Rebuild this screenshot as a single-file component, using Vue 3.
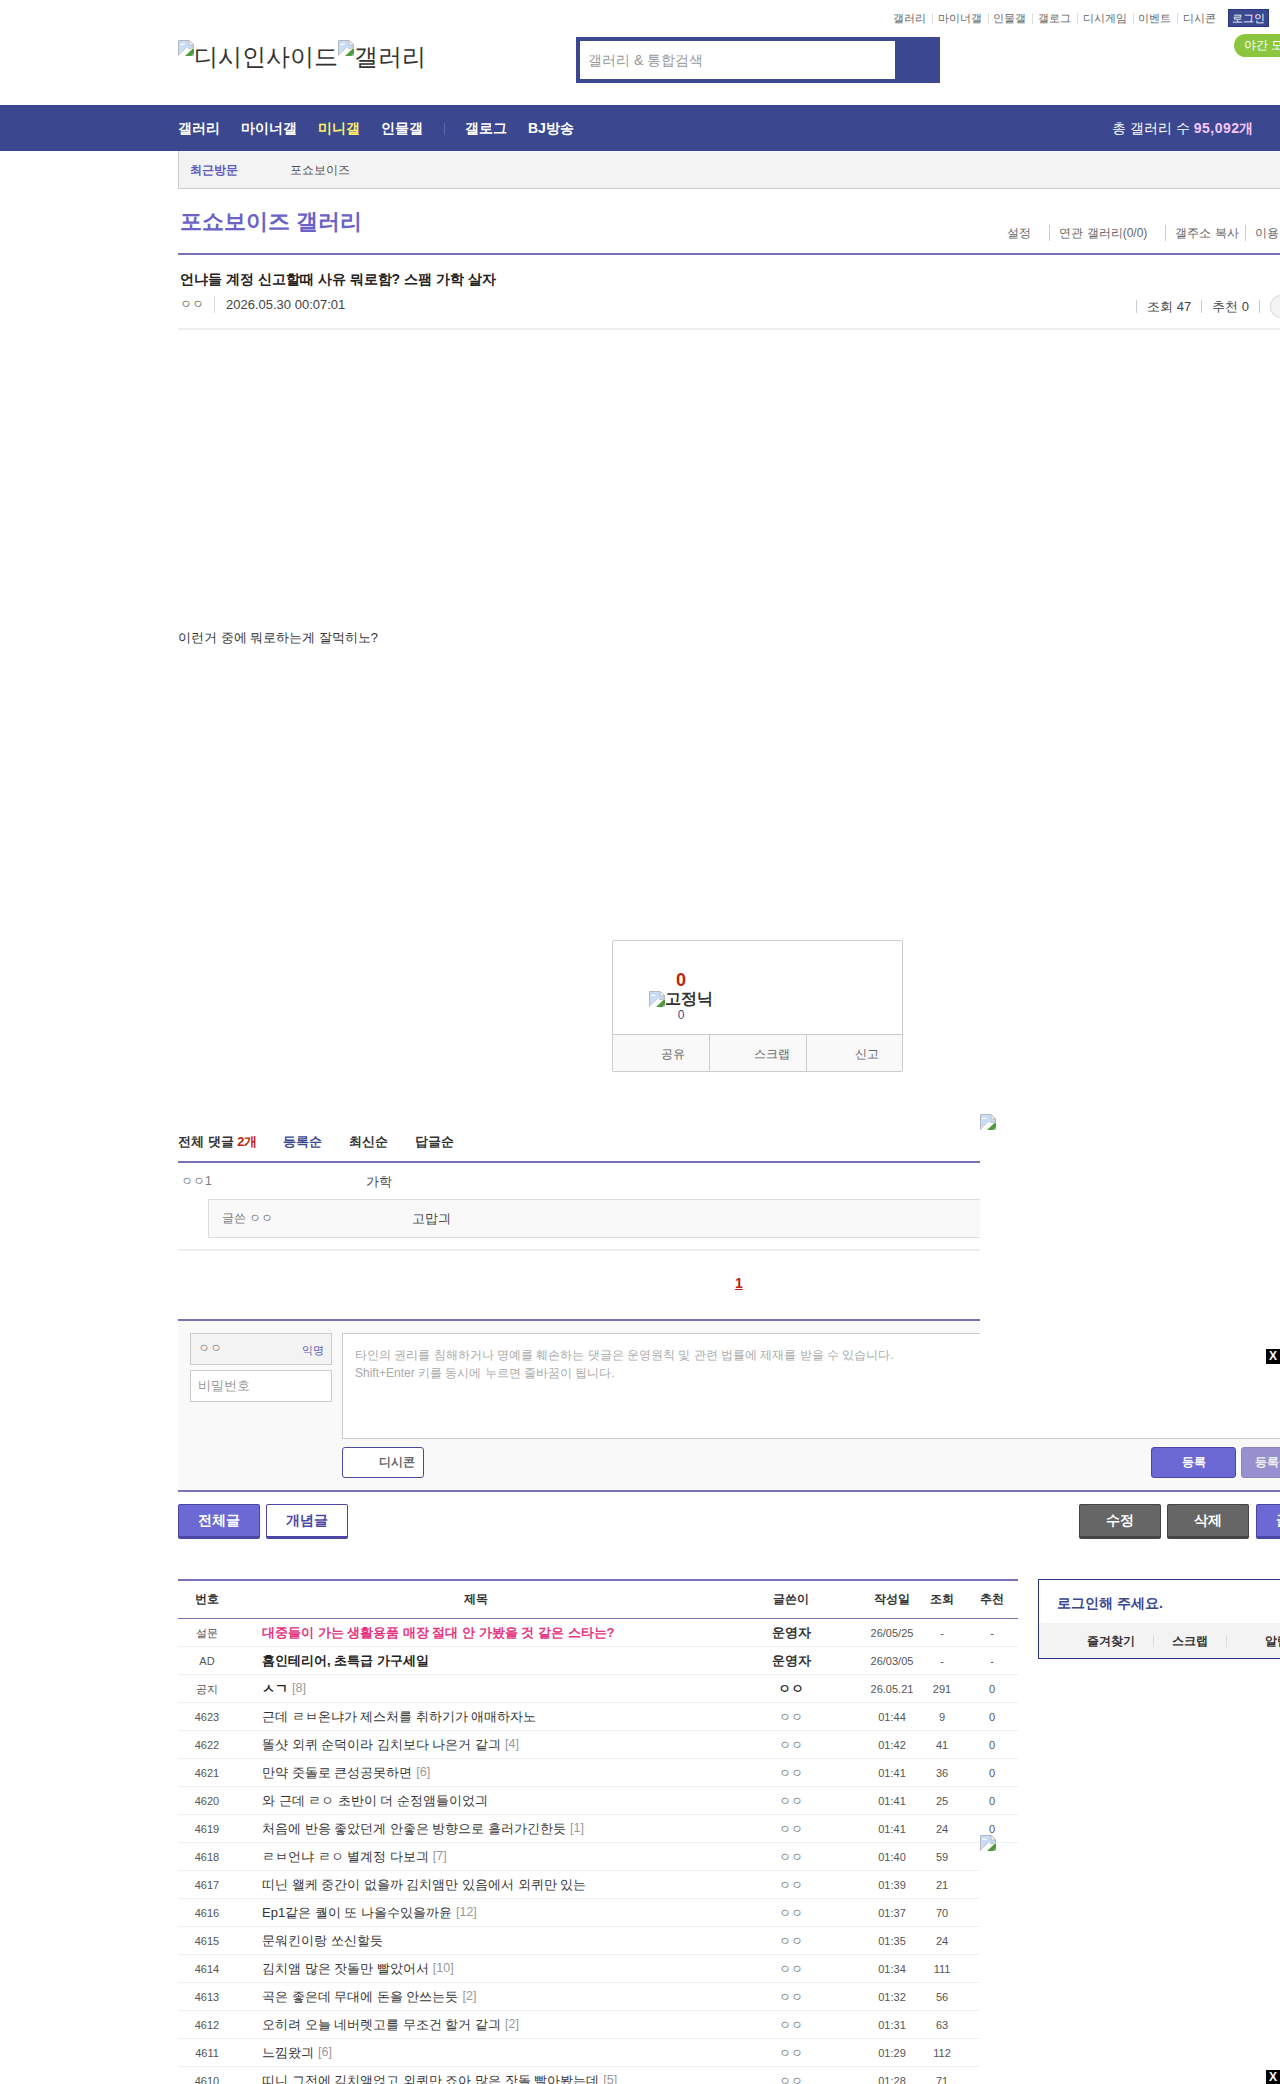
<script setup>
const topLinks = ["갤러리", "마이너갤", "인물갤", "갤로그", "디시게임", "이벤트", "디시콘"];
const mainNav = ["갤러리", "마이너갤", "미니갤", "인물갤"];

const notices = [
  { no: "설문", title: "대중들이 가는 생활용품 매장 절대 안 가봤을 것 같은 스타는?", cls: "pink", writer: "운영자", date: "26/05/25", hit: "-", rec: "-", small: true },
  { no: "AD", title: "홈인테리어, 초특급 가구세일", cls: "bold", writer: "운영자", date: "26/03/05", hit: "-", rec: "-" },
  { no: "공지", title: "ㅅㄱ", cls: "bold", count: 8, writer: "ㅇㅇ", date: "26.05.21", hit: "291", rec: "0", boldName: true },
];

const posts = [
  ["4623", "근데 ㄹㅂ온냐가 제스처를 취하기가 애매하자노", 0, "01:44", "9"],
  ["4622", "똘샷 외퀴 순덕이라 김치보다 나은거 같긔", 4, "01:42", "41"],
  ["4621", "만약 줏돌로 큰성공못하면", 6, "01:41", "36"],
  ["4620", "와 근데 ㄹㅇ 초반이 더 순정앰들이었긔", 0, "01:41", "25"],
  ["4619", "처음에 반응 좋았던게 안좋은 방향으로 흘러가긴한듯", 1, "01:41", "24"],
  ["4618", "ㄹㅂ언냐 ㄹㅇ 별계정 다보긔", 7, "01:40", "59"],
  ["4617", "띠닌 왤케 중간이 없을까 김치앰만 있음에서 외퀴만 있는", 0, "01:39", "21"],
  ["4616", "Ep1같은 퀄이 또 나올수있을까윤", 12, "01:37", "70"],
  ["4615", "문워킨이랑 쏘신할듯", 0, "01:35", "24"],
  ["4614", "김치앰 많은 잣돌만 빨았어서", 10, "01:34", "111"],
  ["4613", "곡은 좋은데 무대에 돈을 안쓰는듯", 2, "01:32", "56"],
  ["4612", "오히려 오늘 네버렛고를 무조건 할거 같긔", 2, "01:31", "63"],
  ["4611", "느낌왔긔", 6, "01:29", "112"],
  ["4610", "띠니 그전에 김치앰얹고 외퀴만 죠아 많은 잣돌 빨아봤는데", 5, "01:28", "71"],
].map(([no, title, count, date, hit]) => ({ no, title, count, date, hit, rec: "0", writer: "ㅇㅇ" }));

const rows = [...notices, ...posts];

const commentHint =
  "타인의 권리를 침해하거나 명예를 훼손하는 댓글은 운영원칙 및 관련 법률에 제재를 받을 수 있습니다.\nShift+Enter 키를 동시에 누르면 줄바꿈이 됩니다.";
</script>

<template>
  <div class="page">
    <svg class="defs" width="0" height="0">
      <symbol id="broken" viewBox="0 0 16 16">
        <path d="M0.5 0.5H11L15.5 5V8L8 8.5L0.5 15.5Z" fill="#c9dcf6" stroke="#b4b8bf" />
        <path d="M11 0.5V5H15.5Z" fill="#fff" stroke="#b4b8bf" />
        <path d="M2 5C3 3 6 3 7 5Z" fill="#fff" />
        <path d="M7 16L15 8.5L16 9V16Z" fill="#4f9a3a" />
        <path d="M13 16L16 13V16Z" fill="#b9bcc2" />
        <path d="M0 16L9 7.5L10.5 8.5L3 16Z" fill="#fff" />
      </symbol>
    </svg>

    <header class="wrap head">
      <div class="top-links">
        <a v-for="link in topLinks" :key="link">{{ link }}</a>
        <a class="login">로그인</a>
      </div>
      <div class="head-row">
        <h1 class="logo">
          <svg class="broken"><use href="#broken" /></svg>디시인사이드<svg class="broken"><use href="#broken" /></svg>갤러리
        </h1>
        <div class="search">
          <input placeholder="갤러리 & 통합검색" />
        </div>
        <div class="night">야간 모드</div>
      </div>
    </header>

    <nav class="gnb">
      <div class="wrap gnb-in">
        <a v-for="item in mainNav" :key="item" :class="{ on: item === '미니갤' }">{{ item }}</a>
        <i class="gnb-sep"></i>
        <a>갤로그</a>
        <a>BJ방송</a>
        <p class="total">총 갤러리 수 <b>95,092개</b></p>
      </div>
    </nav>

    <main class="wrap">
      <div class="recent">
        <b>최근방문</b>
        <span>포쇼보이즈</span>
      </div>

      <div class="gall-head">
        <h2>포쇼보이즈 갤러리</h2>
        <ul class="gall-menu">
          <li>설정</li>
          <li>연관 갤러리(0/0)</li>
          <li>갤주소 복사</li>
          <li>이용 안내</li>
        </ul>
      </div>

      <div class="post-head">
        <h3>언냐들 계정 신고할때 사유 뭐로함? 스팸 가학 살자</h3>
        <div class="post-meta">
          <span class="nick">ㅇㅇ</span>
          <span class="date">2026.05.30 00:07:01</span>
          <div class="counts">
            <span>조회 47</span>
            <span>추천 0</span>
            <span class="round"></span>
          </div>
        </div>
      </div>

      <p class="post-body">이런거 중에 뭐로하는게 잘먹히노?</p>

      <section class="vote">
        <div class="vote-top">
          <div class="vote-nums">
            <b class="up">0</b>
            <div class="fix"><svg class="broken"><use href="#broken" /></svg>고정닉</div>
            <span class="fix-num">0</span>
          </div>
        </div>
        <div class="vote-btns">
          <a>공유</a>
          <a>스크랩</a>
          <a>신고</a>
        </div>
      </section>

      <section class="comments">
        <div class="cmt-head">
          <b>전체 댓글 <em>2개</em></b>
          <a class="on">등록순</a>
          <a>최신순</a>
          <a>답글순</a>
        </div>
        <div class="cmt-row">
          <span class="cmt-nick">ㅇㅇ1</span>
          <span class="cmt-text">가학</span>
        </div>
        <div class="cmt-reply">
          <span class="cmt-nick">글쓴 ㅇㅇ</span>
          <span class="cmt-text">고맙긔</span>
        </div>
        <div class="pager"><a>1</a></div>
      </section>

      <section class="write">
        <div class="write-left">
          <div class="name-box"><span>ㅇㅇ</span><em>익명</em></div>
          <input class="pw" placeholder="비밀번호" />
        </div>
        <div class="write-right">
          <textarea :placeholder="commentHint"></textarea>
          <div class="write-btns">
            <button class="dccon">디시콘</button>
            <button class="reg">등록</button>
            <button class="reg alt">등록+추천</button>
          </div>
        </div>
      </section>

      <div class="board-btns">
        <button class="btn blue">전체글</button>
        <button class="btn line">개념글</button>
        <button class="btn gray push">수정</button>
        <button class="btn gray">삭제</button>
        <button class="btn blue last">글쓰기</button>
      </div>

      <div class="board">
        <div class="list">
          <div class="line-row list-head">
            <span>번호</span>
            <span>제목</span>
            <span>글쓴이</span>
            <span>작성일</span>
            <span>조회</span>
            <span>추천</span>
          </div>
          <div v-for="row in rows" :key="row.no" class="line-row item">
            <span class="num">{{ row.no }}</span>
            <span class="subject" :class="row.cls">{{ row.title }}<i v-if="row.count">[{{ row.count }}]</i></span>
            <span class="writer" :class="{ strong: row.writer === '운영자' || row.boldName }">{{ row.writer }}</span>
            <span class="num">{{ row.date }}</span>
            <span class="num">{{ row.hit }}</span>
            <span class="num">{{ row.rec }}</span>
          </div>
        </div>
        <aside class="side">
          <p class="side-msg">로그인해 주세요.</p>
          <div class="side-tabs">
            <a>즐겨찾기</a>
            <a>스크랩</a>
            <a>알림</a>
          </div>
        </aside>
      </div>
    </main>

    <div class="ad first">
      <svg class="broken"><use href="#broken" /></svg>
      <div class="ad-panel"></div>
      <span class="ad-x">X</span>
    </div>
    <div class="ad second">
      <svg class="broken"><use href="#broken" /></svg>
      <div class="ad-panel"></div>
      <span class="ad-x">X</span>
    </div>
  </div>
</template>

<style>
html,
body {
  margin: 0;
  overflow: hidden;
  background: #fff;
}
</style>

<style scoped>
* {
  box-sizing: border-box;
  margin: 0;
  padding: 0;
}
.page {
  position: relative;
  width: 1280px;
  height: 2084px;
  overflow: hidden;
  font-family: "Liberation Sans", sans-serif;
  font-size: 12px;
  color: #333;
}
.defs {
  position: absolute;
}
.broken {
  display: inline-block;
  width: 16px;
  height: 16px;
  flex: none;
}
a {
  cursor: pointer;
}
ul {
  list-style: none;
}
em,
i {
  font-style: normal;
}
.wrap {
  width: 1160px;
  margin-left: 178px;
}

/* header */
.head {
  height: 105px;
  padding-top: 9px;
}
.top-links {
  display: flex;
  align-items: center;
  justify-content: flex-end;
  height: 18px;
  padding-right: 69px;
  font-size: 11px;
  color: #666;
}
.top-links a + a {
  margin-left: 6px;
  padding-left: 4.67px;
  border-left: 1px solid #ddd;
  line-height: 11px;
}
.top-links .login {
  margin-left: 12px;
  padding: 0 3px;
  height: 18px;
  line-height: 16px;
  border: 1px solid #29367c;
  background: #3b4890;
  color: #fff;
}
.head-row {
  display: flex;
  margin-top: 7px;
}
.logo {
  width: 398px;
  margin-top: 1px;
  font-size: 24px;
  font-weight: 400;
  line-height: 44px;
  white-space: nowrap;
}
.logo .broken {
  vertical-align: top;
  margin-top: 5px;
}
.search {
  width: 364px;
  height: 46px;
  margin-top: 3px;
  padding: 4px 0 4px 4px;
  background: #3b4890;
}
.search input {
  display: block;
  width: 315px;
  height: 38px;
  padding-left: 8px;
  border: 0;
  font: 14px "Liberation Sans", sans-serif;
}
.search input::placeholder {
  color: #999;
}
.night {
  flex: none;
  width: 100px;
  height: 23px;
  margin-left: 294px;
  padding-left: 10px;
  border-radius: 12px;
  background: #8cc63f;
  color: #fff;
  line-height: 23px;
}

/* nav */
.gnb {
  height: 46px;
  background: #3b4890;
}
.gnb-in {
  display: flex;
  align-items: center;
  gap: 21px;
  height: 46px;
  padding-top: 1px;
  font-size: 14px;
  font-weight: 700;
  color: #fff;
}
.gnb-in .on {
  color: #ffee66;
}
.gnb-sep {
  width: 1px;
  height: 12px;
  margin-right: -1px;
  background: #5a66a8;
}
.total {
  margin-left: auto;
  margin-right: 84px;
  font-weight: 400;
  font-size: 14px;
}
.total b {
  letter-spacing: 0.5px;
  color: #f6c6ff;
}

.recent {
  display: flex;
  gap: 52px;
  align-items: center;
  height: 38px;
  padding: 1px 0 0 11px;
  border-left: 1px solid #ccc;
  border-bottom: 1px solid #ccc;
  background: #f3f3f3;
  color: #555;
}
.recent span {
  font-size: 11.5px;
}
.recent b {
  color: #5b5bbf;
}

.gall-head {
  display: flex;
  justify-content: space-between;
  height: 66px;
  padding-left: 2px;
  border-bottom: 2px solid #7873b8;
}
.gall-head h2 {
  margin-top: 18px;
  font-size: 22px;
  line-height: 30px;
  font-weight: 700;
  color: #6a62c8;
}
.gall-menu {
  display: flex;
  margin-top: 36px;
  color: #666;
  line-height: 16px;
  height: 16px;
}
.gall-menu li + li {
  margin-left: 8px;
  padding-left: 9px;
  border-left: 1px solid #ccc;
}
.gall-menu li:nth-child(1) {
  padding-right: 10px;
}
.gall-menu li:nth-child(2) {
  padding-right: 10px;
}
.gall-menu li:last-child {
  margin-left: 6px;
  padding-right: 32px;
}

.post-head {
  height: 75px;
  padding: 15px 0 0 2px;
  border-bottom: 2px solid #eee;
}
.post-head h3 {
  font-size: 14px;
  line-height: 18px;
  font-weight: 700;
  color: #222;
}
.post-meta {
  display: flex;
  align-items: center;
  height: 22px;
  margin-top: 7px;
}
.nick {
  margin-bottom: 3px;
  padding: 0 10px 0 0;
  border-right: 1px solid #ddd;
  color: #666;
}
.date {
  margin: 0 0 3px 11px;
  font-size: 13px;
  color: #444;
}
.counts {
  display: flex;
  align-items: center;
  margin-left: auto;
  font-size: 13px;
  color: #444;
}
.counts span {
  padding: 0 10px;
  border-left: 1px solid #ccc;
  line-height: 13px;
}
.counts span:nth-child(2) {
  border-right: 1px solid #ccc;
}
.counts .round {
  width: 68px;
  height: 23px;
  margin-left: 10px;
  padding: 0;
  border: 0;
  border-radius: 11px;
  background: #f3f3f3;
  box-shadow: inset 0 0 0 1px #ddd;
}

.post-body {
  padding-top: 299px;
  font-size: 13px;
  line-height: 18px;
}

/* vote */
.vote {
  width: 291px;
  height: 132px;
  margin: 293px 0 0 434px;
  border: 1px solid #ccc;
  border-radius: 2px;
}
.vote-top {
  height: 93px;
  padding: 29px 0 0 36px;
}
.vote-nums {
  width: 64px;
  text-align: center;
}
.up {
  display: block;
  font-size: 18px;
  line-height: 20px;
  color: #c21f0e;
}
.fix {
  display: flex;
  align-items: center;
  height: 20px;
  margin-top: -1px;
  font-size: 16px;
  font-weight: 700;
}
.fix-num {
  display: block;
  color: #3b4890;
  line-height: 14px;
  margin-top: -1px;
}
.vote-btns {
  display: flex;
  height: 37px;
  border-top: 1px solid #ccc;
  background: #f9f9f9;
  color: #666;
}
.vote-btns a {
  flex: none;
  width: 97px;
  padding-right: 23px;
  border-left: 1px solid #ccc;
  text-align: right;
  line-height: 38px;
}
.vote-btns a:first-child {
  width: 96px;
  padding-right: 24px;
  border-left: 0;
}
.vote-btns a:nth-child(2) {
  padding-right: 16px;
}
.vote-btns a:last-child {
  width: 96px;
}

/* comments */
.comments {
  margin-top: 58px;
}
.cmt-head {
  display: flex;
  gap: 27px;
  height: 33px;
  border-bottom: 2px solid #7873b8;
  font-size: 13px;
  font-weight: 700;
  line-height: 24px;
}
.cmt-head b {
  margin-right: -1px;
}
.cmt-head em {
  color: #c21f0e;
}
.cmt-head a.on {
  color: #3b4890;
}
.cmt-row {
  display: flex;
  height: 36px;
  align-items: center;
  padding: 1px 0 0 3px;
}
.cmt-nick {
  width: 185px;
  color: #777;
}
.cmt-text {
  font-size: 13px;
  color: #444;
}
.cmt-reply {
  display: flex;
  align-items: center;
  height: 39px;
  margin-left: 30px;
  padding-left: 13px;
  border: 1px solid #ddd;
  border-right: 0;
  background: #f9f9f9;
}
.cmt-reply .cmt-nick {
  width: 190px;
}
.pager {
  height: 70px;
  margin-top: 11px;
  padding: 23px 38px 0 0;
  border-top: 2px solid #eee;
  text-align: center;
  line-height: 18px;
}
.pager a {
  font-size: 14px;
  font-weight: 700;
  color: #c21f0e;
  text-decoration: underline;
}

/* comment form */
.write {
  display: flex;
  gap: 10px;
  height: 173px;
  padding: 12px;
  border-top: 2px solid #7873b8;
  border-bottom: 2px solid #7873b8;
  background: #f9f9f9;
}
.write-left {
  width: 142px;
}
.name-box {
  display: flex;
  justify-content: space-between;
  height: 32px;
  padding: 0 7px 0 7px;
  border: 1px solid #ccc;
  background: #f3f3f3;
  color: #888;
  line-height: 29px;
}
.name-box em {
  font-size: 11px;
  line-height: 32px;
  color: #5b5bbf;
}
.pw {
  display: block;
  width: 142px;
  height: 32px;
  margin-top: 5px;
  padding-left: 7px;
  border: 1px solid #ccc;
  font: 12.5px "Liberation Sans", sans-serif;
}
.pw::placeholder {
  color: #999;
}
.write-right {
  flex: 1;
}
.write-right textarea {
  display: block;
  width: 100%;
  height: 106px;
  padding: 12px 12px;
  border: 1px solid #ccc;
  resize: none;
  font: 12px/18px "Liberation Sans", sans-serif;
}
.write-right textarea::placeholder {
  color: #aaa;
}
.write-btns {
  display: flex;
  gap: 5px;
  margin-top: 8px;
}
.write-btns button {
  height: 31px;
  border-radius: 3px;
  font: 700 12px "Liberation Sans", sans-serif;
}
.dccon {
  width: 82px;
  margin-right: auto;
  padding-left: 28px;
  border: 1px solid #4b4a9f;
  background: #fff;
  color: #666;
}
.reg {
  width: 85px;
  border: 1px solid #4b48a5;
  background: #6c68d4;
  color: #fff;
}
.reg.alt {
  border-color: #8a86c4;
  background: #9690cf;
  color: #eee;
  text-align: left;
  padding-left: 13px;
}

.board-btns {
  display: flex;
  gap: 6px;
  margin-top: 12px;
}
.btn {
  width: 82px;
  height: 35px;
  border-radius: 2px;
  border: 1px solid;
  border-bottom-width: 3px;
  font: 700 14px "Liberation Sans", sans-serif;
}
.btn.blue {
  border-color: #4b48a5;
  background: #6c68d4;
  color: #fff;
}
.btn.line {
  border-color: #4b48a5;
  background: #fff;
  color: #4b48a5;
}
.btn.gray {
  border-color: #444;
  background: #666;
  color: #fff;
}
.btn.push {
  margin-left: auto;
}
.btn.last {
  margin-left: 1px;
}

/* list */
.board {
  display: flex;
  gap: 20px;
  margin-top: 40px;
}
.list {
  width: 840px;
  flex: none;
}
.line-row {
  display: grid;
  grid-template-columns: 58px 480px 150px 52px 48px 52px;
  align-items: center;
  text-align: center;
}
.list-head {
  height: 40px;
  border-top: 2px solid #7873b8;
  border-bottom: 1px solid #7873b8;
  font-weight: 700;
}
.item {
  height: 28px;
  padding-top: 1px;
  border-bottom: 1px solid #eee;
}
.num {
  font-size: 11px;
  color: #555;
}
.subject {
  padding-left: 26px;
  text-align: left;
  font-size: 13px;
  white-space: nowrap;
}
.subject i {
  position: relative;
  top: -1px;
  margin-left: 4px;
  font-family: "Liberation Sans Narrow", "Liberation Sans", sans-serif;
  font-size: 12.5px;
  font-weight: 400;
  color: #999;
}
.subject.pink {
  font-weight: 700;
  color: #e5357f;
}
.subject.bold {
  font-weight: 700;
  color: #222;
}
.writer {
  color: #777;
}
.writer.strong {
  font-size: 13px;
  font-weight: 700;
  color: #333;
}

/* side */
.side {
  flex: none;
  width: 300px;
  height: 80px;
  border: 1px solid #29367c;
}
.side-msg {
  height: 43px;
  padding-left: 18px;
  font-size: 14px;
  font-weight: 700;
  line-height: 46px;
  color: #3b4890;
}
.side-tabs {
  display: flex;
  align-items: center;
  height: 35px;
  padding: 1px 0 0 48px;
  background: #f3f3f3;
  font-weight: 700;
}
.side-tabs a + a {
  margin-left: 18px;
  padding-left: 18px;
  border-left: 1px solid #ddd;
  line-height: 12px;
}
.side-tabs a:last-child {
  margin-left: 18px;
  padding-left: 38px;
}

/* floating ad units */
.ad {
  position: absolute;
  left: 980px;
  width: 300px;
  height: 324px;
}
.ad .broken {
  display: block;
}
.ad-panel {
  height: 308px;
  background: #fff;
}
.ad.first {
  top: 1114px;
}
.ad.second {
  top: 1835px;
}
.ad-x {
  position: absolute;
  top: 235px;
  right: 0;
  width: 14px;
  height: 15px;
  background: #000;
  color: #fff;
  font-size: 12px;
  font-weight: 700;
  line-height: 15px;
  text-align: center;
}
</style>
